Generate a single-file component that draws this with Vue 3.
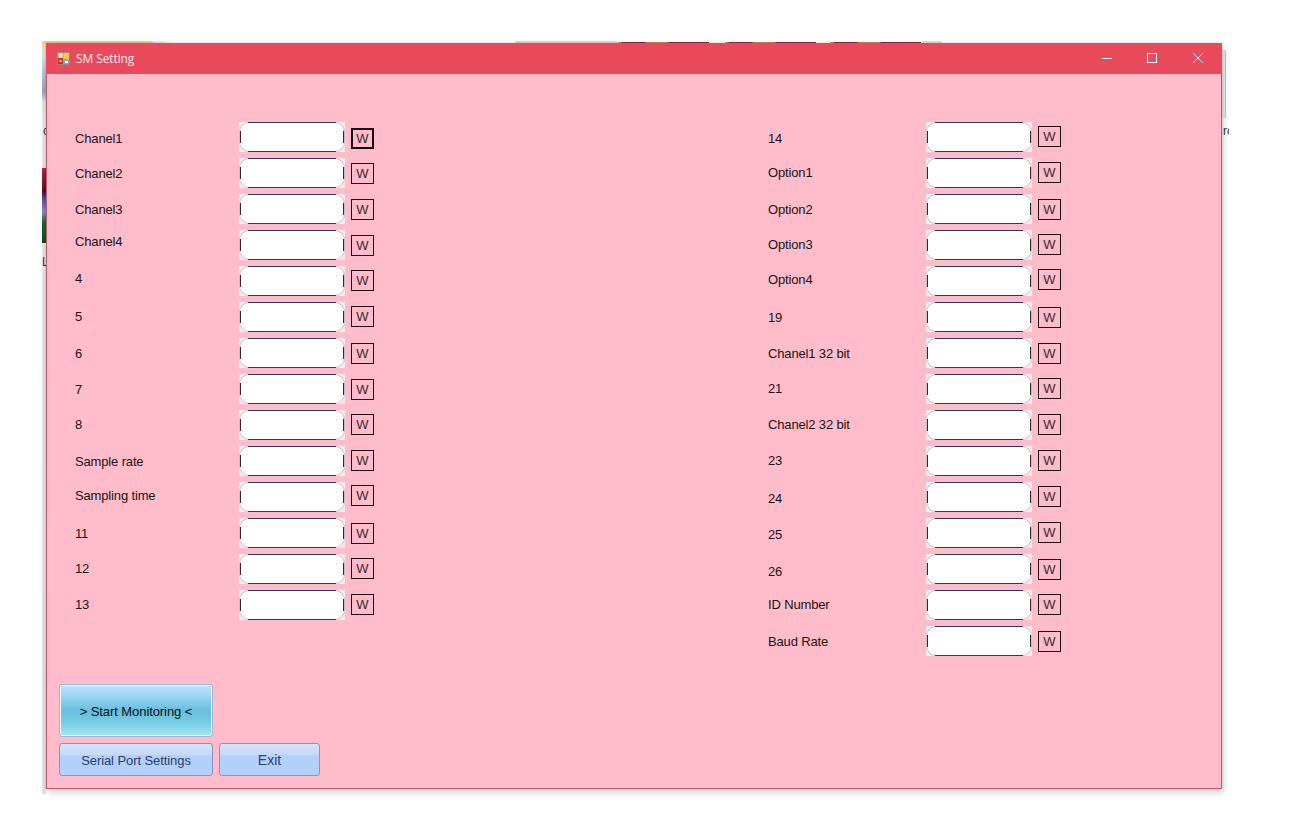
<script setup>
const rawLeft = [
  ['Chanel1', 1, 1], ['Chanel2', 0, 0], ['Chanel3', 0, 0], ['Chanel4', -4, 0],
  ['4', -3, -1], ['5', -1, -1], ['6', 0, 0], ['7', 0, 0], ['8', -1, -1],
  ['Sample rate', 0, -1], ['Sampling time', -2, -2], ['11', 0, 0], ['12', -1, -1], ['13', -1, -1]
]
const rawRight = [
  ['14', 1, -1], ['Option1', -1, -1], ['Option2', 0, 0], ['Option3', -1, -1], ['Option4', -2, -2],
  ['19', 0, 0], ['Chanel1 32 bit', 0, 0], ['21', -1, -1], ['Chanel2 32 bit', -1, -1],
  ['23', -1, -1], ['24', 1, -1], ['25', 1, -1], ['26', 2, 0], ['ID Number', -1, -1], ['Baud Rate', 0, 0]
]
const toRows = (list) => list.map(([label, labelShift, btnShift]) => ({
  label,
  labelStyle: { transform: `translateY(${labelShift}px)` },
  btnStyle: { transform: `translateY(${btnShift}px)` }
}))
const leftRows = toRows(rawLeft)
const rightRows = toRows(rawRight)
</script>

<template>
  <div class="desk">
    <div class="backdrop top-strip">
      <span class="seg seg-a"></span><span class="seg seg-b"></span><span class="seg seg-c"></span>
    </div>
    <div class="backdrop left-strip"></div>
    <div class="backdrop left-pic"></div>
    <div class="backdrop right-strip"></div>
    <span class="backdrop peek peek-l">c</span>
    <span class="backdrop peek peek-r">ro</span>
    <span class="backdrop peek peek-b">L</span>

    <section class="window">
      <header class="titlebar">
        <svg class="app-icon" width="16" height="16" viewBox="0 0 16 16">
          <rect x="1.5" y="1.5" width="12" height="12" fill="#e8e4da" stroke="#8a8a8a" stroke-width="1" />
          <rect x="7" y="2" width="6" height="6" fill="#f6c83c" />
          <rect x="2" y="2" width="5" height="5" fill="#f3e3c8" stroke="#c08a50" stroke-width=".6" />
          <rect x="2" y="7" width="5" height="6" fill="#c8342a" />
          <rect x="3.5" y="9" width="2" height="2" fill="#f4d04a" />
          <rect x="7" y="8" width="6" height="5" fill="#7fa8dc" />
          <rect x="9" y="10" width="3" height="2" fill="#ffffff" />
        </svg>
        <span class="title">SM Setting</span>
        <div class="controls">
          <svg class="ctl" width="12" height="12" viewBox="0 0 12 12"><path d="M1 6.5h10" stroke="#fff" fill="none" /></svg>
          <svg class="ctl" width="12" height="12" viewBox="0 0 12 12"><rect x="1.5" y="1.5" width="9" height="9" stroke="#fff" fill="none" /></svg>
          <svg class="ctl ctl-close" width="12" height="12" viewBox="0 0 12 12"><path d="M1 1l10 10M11 1L1 11" stroke="#fff" fill="none" /></svg>
        </div>
      </header>

      <main class="body">
        <div class="columns">
          <div class="col col-left">
            <div v-for="row in leftRows" :key="row.label" class="row">
              <span class="label" :style="row.labelStyle">{{ row.label }}</span>
              <div class="field"><input class="input" type="text" /></div>
              <button class="w" :class="{ focused: row.label === 'Chanel1' }" :style="row.btnStyle">W</button>
            </div>
          </div>
          <div class="col col-right">
            <div v-for="row in rightRows" :key="row.label" class="row">
              <span class="label" :style="row.labelStyle">{{ row.label }}</span>
              <div class="field"><input class="input" type="text" /></div>
              <button class="w" :style="row.btnStyle">W</button>
            </div>
          </div>
        </div>

        <div class="actions">
          <button class="start">&gt; Start Monitoring &lt;</button>
          <div class="action-row">
            <button class="soft serial">Serial Port Settings</button>
            <button class="soft exit">Exit</button>
          </div>
        </div>
      </main>
    </section>
  </div>
</template>

<style>
html, body { background: #ffffff; }
</style>

<style scoped>
.desk {
  position: relative;
  width: 1291px;
  height: 836px;
  overflow: hidden;
  background: #ffffff;
  font-family: "Liberation Sans", Arial, sans-serif;
}
.backdrop { position: absolute; }
.top-strip {
  left: 42px; top: 41px; width: 900px; height: 3px;
  background: linear-gradient(90deg, #efd08c 0, #efd08c 110px, #f3dcd8 111px, #fff 130px, #fff 472px, #e7d3d6 475px, #e7d3d6 575px, #fff 576px, #fff 880px, #ecdde0 881px);
}
.seg {
  position: absolute;
  top: 1px;
  height: 2px;
  width: 91px;
  background: linear-gradient(90deg, #c99a50 0, #c99a50 3px, #8c2a48 4px, #8c2a48 27px, #c08a58 28px, #c08a58 50px, #8c2a48 51px);
}
.seg-a { left: 576px; }
.seg-b { left: 683px; }
.seg-c { left: 788px; }
.left-strip {
  left: 42px; top: 44px; width: 4px; height: 750px;
  background: linear-gradient(180deg, #eedca8 0, #dfe3e8 12px, #b8c6d6 28px, #8ea8c4 48px, #dde3e9 58px, #ece8ea 76px, #ece4e8 120px, #e6e0e2 750px);
}
.left-pic {
  left: 42px; top: 168px; width: 4px; height: 75px;
  background: linear-gradient(180deg, #b5234a 0, #5a0e24 24px, #4a4aa8 30px, #8a8ac8 44px, #1a6b2c 54px, #0e4a1c 75px);
}
.right-strip {
  left: 1222px; top: 50px; width: 4px; height: 68px;
  box-sizing: border-box;
  background: #f1f1f1;
  border-right: 1px solid #c4c4c4;
}
.peek { font-size: 12px; color: #333; line-height: 14px; overflow: hidden; }
.peek-l { left: 43px; top: 124px; width: 3px; }
.peek-r { left: 1223px; top: 124px; width: 6px; }
.peek-b { left: 42px; top: 255px; width: 4px; }

.window {
  position: relative;
  left: 46px;
  top: 43px;
  width: 1176px;
  height: 746px;
  box-sizing: border-box;
  border-right: 1px solid #c25a6c;
  border-bottom: 1px solid #c25a6c;
  border-left: 1px solid #c25a6c;
  background: #ffbcca;
  box-shadow: 0 0 3px rgba(0, 0, 0, .18), 2px 4px 7px rgba(0, 0, 0, .16);
  display: flex;
  flex-direction: column;
}
.titlebar {
  height: 31px;
  margin: 0 -1px;
  flex: none;
  background: #e84a5c;
  display: flex;
  align-items: center;
  padding-left: 10px;
  color: #fdeef0;
}
.app-icon { flex: none; }
.title {
  margin-left: 4px;
  font-family: "Open Sans", "Noto Sans", sans-serif;
  font-size: 12px;
  letter-spacing: -.1px;
}
.controls {
  margin-left: auto;
  display: flex;
  align-items: center;
  gap: 33px;
  padding: 0 18px 1px 0;
}
.ctl { display: block; }
.ctl-close { margin-left: 1px; }

.body {
  flex: 1;
  padding: 48px 0 0 12px;
  display: flex;
  flex-direction: column;
}
.columns {
  display: flex;
  flex: none;
}
.col { display: flex; flex-direction: column; }
.col-left { width: 709px; padding-left: 16px; box-sizing: border-box; }
.row {
  height: 36px;
  flex: none;
  display: flex;
  align-items: flex-start;
}
.label {
  width: 164px;
  height: 30px;
  flex: none;
  font-size: 13px;
  line-height: 32px;
  letter-spacing: -.15px;
  color: #1a1414;
  white-space: nowrap;
}
.col-right .label { width: 158px; }
.field {
  position: relative;
  width: 106px;
  height: 30px;
  flex: none;
  background: #fbe9ee;
}
.field::before, .field::after {
  content: "";
  position: absolute;
  pointer-events: none;
}
.field::before {
  left: 9px; right: 9px; top: 0; bottom: 0;
  border-top: 1px solid #2f3468;
  border-bottom: 1px solid #2f3468;
}
.field::after {
  left: 1px; right: 1px; top: 9px; bottom: 9px;
  border-left: 1px solid #2b2b3c;
  border-right: 1px solid #2b2b3c;
}
.input {
  display: block;
  width: 100%;
  height: 100%;
  box-sizing: border-box;
  border: 1px solid #c4bec8;
  border-radius: 10px;
  background: #ffffff;
  outline: none;
  padding: 0;
}
.w {
  width: 23px;
  height: 21px;
  margin: 5px 0 0 6px;
  flex: none;
  box-sizing: border-box;
  padding: 0;
  border: 1px solid #1c1015;
  background: #ffbcca;
  font-family: "Liberation Sans", Arial, sans-serif;
  font-size: 13px;
  line-height: 18px;
  color: #3a2a32;
}
.focused { border: 2px solid #140c10; line-height: 16px; }

.actions {
  margin-top: 22px;
  display: flex;
  flex-direction: column;
  gap: 6px;
}
.start {
  width: 154px;
  height: 53px;
  box-sizing: border-box;
  padding: 2px 0 0;
  border: 1px solid #9fb6d6;
  border-radius: 3px;
  box-shadow: inset 0 0 0 1px #eaf6fb;
  background: linear-gradient(180deg, #bde4f9 0, #9ad5f3 22%, #68bedd 50%, #74cbe2 72%, #a3e7f0 100%);
  font-family: "Liberation Sans", Arial, sans-serif;
  font-size: 13px;
  letter-spacing: -.08px;
  color: #06121c;
}
.action-row { display: flex; gap: 6px; }
.soft {
  height: 33px;
  box-sizing: border-box;
  padding: 1px 0 0;
  border: 1px solid #8a94c0;
  border-radius: 3px;
  background: linear-gradient(180deg, #d4e2fb 0, #c6d9f8 35%, #b3d0fb 37%, #b4d1fc 100%);
  font-family: "Liberation Sans", Arial, sans-serif;
  font-size: 13px;
  letter-spacing: -.08px;
  color: #27426e;
}
.serial { width: 154px; }
.exit { width: 101px; font-size: 14px; letter-spacing: 0; }
</style>
